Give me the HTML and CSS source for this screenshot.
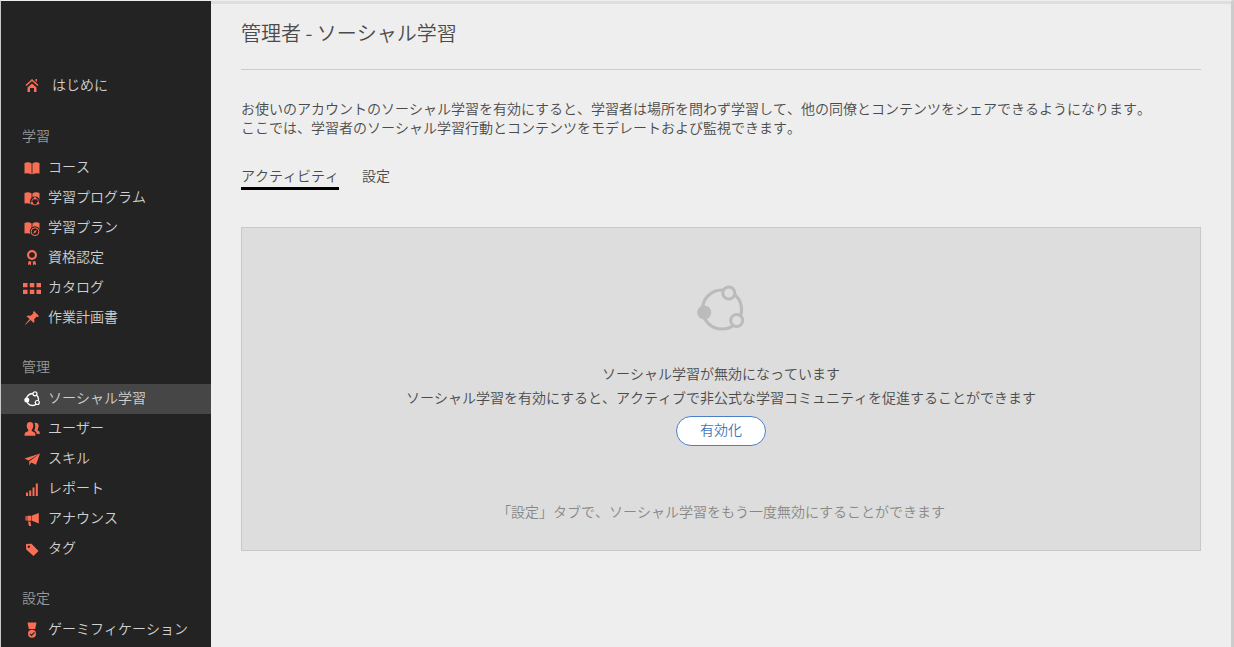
FILE: index.html
```html
<!DOCTYPE html>
<html lang="ja">
<head>
<meta charset="utf-8">
<meta name="viewport" content="width=device-width, initial-scale=1">
<title>管理者 - ソーシャル学習</title>
<link rel="stylesheet" href="styles.css">
</head>
<body>
<div class="app">
  <nav class="sidebar" aria-label="メイン">
    <a class="item home" href="#"><svg class="icon" viewBox="0 0 18 18"><path d="M3 9.500 9 4l6 5.500" fill="none" stroke="currentColor" stroke-width="1.600"/><path d="M12.500 3h1.500v3l-1.500-1z"/><path d="M4.500 11.500 9 7.500l4.500 4V16H11v-4H7v4H4.500z"/></svg>はじめに</a>

    <h2 class="heading">学習</h2>
    <ul class="list">
      <li><a class="item" href="#"><svg class="icon" viewBox="0 0 18 18"><path d="M1.500 4Q5.500 2.500 8.600 4.500V15.500Q5 13.500 1.500 14.500zM16.500 4Q12.500 2.500 9.400 4.500V15.500Q13 13.500 16.500 14.500z"/></svg>コース</a></li>
      <li><a class="item" href="#"><svg class="icon" viewBox="0 0 18 18"><path d="M1.500 4Q5.500 2.500 8.600 4.500V15.500Q5 13.500 1.500 14.500zM16.500 4Q12.500 2.500 9.400 4.500V15.500Q13 13.500 16.500 14.500z"/><circle class="cut" cx="12" cy="12.500" r="5"/><circle cx="12" cy="12.700" r="3.300" fill="none" stroke="currentColor" stroke-width=".8"/><circle cx="12" cy="9.200" r="1.200"/><circle cx="9" cy="14.200" r="1.200"/><circle cx="15" cy="14.200" r="1.200"/></svg>学習プログラム</a></li>
      <li><a class="item" href="#"><svg class="icon" viewBox="0 0 18 18"><path d="M1.500 4Q5.500 2.500 8.600 4.500V15.500Q5 13.500 1.500 14.500zM16.500 4Q12.500 2.500 9.400 4.500V15.500Q13 13.500 16.500 14.500z"/><circle class="cut" cx="12" cy="12.500" r="5.200"/><circle cx="12" cy="12.700" r="3.900" fill="none" stroke="currentColor" stroke-width="1"/><path d="m10.300 14.400 1-2.400 2.400-1-1 2.400z"/></svg>学習プラン</a></li>
      <li><a class="item" href="#"><svg class="icon" viewBox="0 0 18 18"><circle cx="9" cy="6" r="3.900" fill="none" stroke="currentColor" stroke-width="2.200"/><path d="M5.700 12 8.300 12.500 7.800 16.500 6.500 15.200l-1.700.8zM12.300 12 9.700 12.500l.5 4L11.500 15.200l1.700.8z"/></svg>資格認定</a></li>
      <li><a class="item" href="#"><svg class="icon" viewBox="0 0 18 18"><path d="M0 4h4.500v4.300H0zM6.800 4h4.500v4.300H6.800zM13.500 4H18v4.300h-4.500zM0 10.700h4.500V15H0zM6.800 10.700h4.500V15H6.800zM13.500 10.700H18V15h-4.500z"/></svg>カタログ</a></li>
      <li><a class="item" href="#"><svg class="icon" viewBox="0 0 18 18"><path d="m11 2 5 5-1.200 1-1.300-.3-2.300 2.500q.8 2-.5 3.800L7.600 11 2.500 15.800 2 15.500 6.600 10 3.500 7.200q2-1.200 4.100-.4l2.600-2.300L10 3z"/></svg>作業計画書</a></li>
    </ul>

    <h2 class="heading">管理</h2>
    <ul class="list">
      <li><a class="item current" href="#" aria-current="page"><svg class="icon" viewBox="0 0 18 18"><circle cx="9.500" cy="9.500" r="6" fill="none" stroke="currentColor" stroke-width="1.300"/><circle cx="3.800" cy="10" r="2.500"/><g class="node" stroke="currentColor" stroke-width="1.200"><circle cx="12" cy="3.800" r="2"/><circle cx="14.300" cy="12.500" r="2"/></g></svg>ソーシャル学習</a></li>
      <li><a class="item" href="#"><svg class="icon" viewBox="0 0 18 18"><path d="M11.500 3q3-1 4 1.800.5 2.200-.8 4.400v1.300l2 1.300V14h-3l-.5-2-2-1.500q2-3.500.3-7.500z"/><path d="M7 2q3.400.2 3.300 4-.2 2.500-1.600 4v1l3 1.500q.7.500.8 3.200h-11q0-2.700.8-3.200l3-1.500v-1Q3.800 8.500 3.700 6 3.700 2.200 7 2z"/></svg>ユーザー</a></li>
      <li><a class="item" href="#"><svg class="icon" viewBox="0 0 18 18"><path d="M17 3.500 1.500 8.500l4 2zM17 3.500 6.300 11.300l-.3 4.200 2.200-3 4.800 2.200z"/></svg>スキル</a></li>
      <li><a class="item" href="#"><svg class="icon" viewBox="0 0 18 18"><path d="M3 12.500h2V16H3zM6.200 10.500h2V16h-2zM9.500 7.500h2V16h-2zM12.800 3.500h2V16h-2z"/></svg>レポート</a></li>
      <li><a class="item" href="#"><svg class="icon" viewBox="0 0 18 18"><path d="M2.500 6v4.500h1.200V6zM4.300 5.800h4.200v4.900H4.300zM9 5.500 15.800 3v10.500L9 10.800zM5 11.500h2.300l1 4.500H6z"/></svg>アナウンス</a></li>
      <li><a class="item" href="#"><svg class="icon" viewBox="0 0 18 18"><path fill-rule="evenodd" d="M3 4 8.500 3.700 15.500 11l-5 5L3.200 9.500zM5.800 5.500a1.200 1.200 0 1 0 .1 0z"/></svg>タグ</a></li>
    </ul>

    <h2 class="heading">設定</h2>
    <ul class="list">
      <li><a class="item" href="#"><svg class="icon" viewBox="0 0 18 18"><path d="M4.500 1.500h9L12.200 8H5.800z"/><circle cx="9" cy="12.800" r="4"/><path class="tick" d="m7 12.800 1.500 1.500 3-3" fill="none"/></svg>ゲーミフィケーション</a></li>
    </ul>
  </nav>

  <main class="main">
    <h1 class="title">管理者 - ソーシャル学習</h1>
    <p class="intro">お使いのアカウントのソーシャル学習を有効にすると、学習者は場所を問わず学習して、他の同僚とコンテンツをシェアできるようになります。<br>ここでは、学習者のソーシャル学習行動とコンテンツをモデレートおよび監視できます。</p>
    <div class="tabs" role="tablist">
      <button class="tab selected" type="button" role="tab" aria-selected="true">アクティビティ</button>
      <button class="tab" type="button" role="tab" aria-selected="false">設定</button>
    </div>
    <section class="panel">
      <svg class="emblem" viewBox="0 0 48 48"><circle cx="25" cy="25.500" r="19.500" fill="none" stroke="currentColor" stroke-width="3.200"/><circle cx="7.200" cy="28.500" r="7"/><g class="node" stroke="currentColor" stroke-width="3"><circle cx="31.800" cy="9" r="6"/><circle cx="39.700" cy="36.500" r="6"/></g></svg>
      <p class="message">ソーシャル学習が無効になっています</p>
      <p class="message">ソーシャル学習を有効にすると、アクティブで非公式な学習コミュニティを促進することができます</p>
      <button class="enable" type="button">有効化</button>
      <p class="note">「設定」タブで、ソーシャル学習をもう一度無効にすることができます</p>
    </section>
  </main>
</div>
</body>
</html>
```
FILE: styles.css
```css
* {
  box-sizing: border-box;
}

body {
  margin: 0;
  background: #eeeeee;
  color: #4b4b4b;
  font: 350 14px/20px "Noto Sans CJK JP", sans-serif;
  font-kerning: none;
}

h1, h2, p, ul {
  margin: 0;
  padding: 0;
  font-weight: inherit;
}

button {
  font: inherit;
  font-kerning: inherit;
  color: inherit;
  cursor: pointer;
}

.app {
  display: flex;
  min-height: 100vh;
  border-top: 1px solid #eeeeee;
  border-left: 1px solid #c8c8c8;
  border-right: 3px solid #cccccc;
}

.sidebar {
  flex: none;
  width: 210px;
  padding-top: 69px;
  background: #232323;
  color: #d0d0d0;
}

.list {
  list-style: none;
}

.item {
  display: flex;
  align-items: center;
  gap: 7px;
  height: 30px;
  padding-bottom: 4px;
  padding-left: 22px;
  color: inherit;
  text-decoration: none;
}

.home {
  gap: 11px;
  margin-bottom: 2px;
  padding-bottom: 2px;
}

.icon {
  width: 18px;
  height: 18px;
  margin-top: 4px;
  color: #f96e55;
  fill: currentColor;
}

.home .icon {
  margin-top: 2px;
}

.cut {
  fill: #232323;
}

.tick {
  stroke: #232323;
  stroke-width: 1.2;
}

.current {
  background: #464646;
}

.current .icon {
  color: #ffffff;
}

.current .node {
  fill: #464646;
}

.heading {
  padding: 23px 0 8px 21px;
  color: #999999;
  font-size: 14px;
}

.main {
  flex: 1;
  padding: 16px 30px 30px;
  border-top: 3px solid #dedede;
}

.title {
  padding-bottom: 23px;
  border-bottom: 1px solid #cccccc;
  font-size: 20px;
  line-height: 26px;
}

.intro {
  margin-top: 29px;
  line-height: 19px;
}

.tabs {
  display: flex;
  gap: 23px;
  margin-top: 28px;
}

.tab {
  padding: 0 0 2px;
  border: 0;
  border-bottom: 3px solid transparent;
  background: none;
}

.selected {
  border-bottom-color: #000000;
}

.panel {
  display: flex;
  flex-direction: column;
  align-items: center;
  margin-top: 37px;
  padding: 56px 20px 29px;
  border: 1px solid #c8c8c8;
  background: #dddddd;
  text-align: center;
}

.emblem {
  width: 48px;
  height: 48px;
  margin-bottom: 29px;
  color: #bbbbbb;
  fill: currentColor;
}

.emblem .node {
  fill: #dddddd;
}

.message {
  line-height: 24px;
}

.enable {
  width: 90px;
  height: 30px;
  margin-top: 7px;
  padding: 0 0 4px;
  border: 1px solid #4b7fc9;
  border-radius: 15px;
  background: #ffffff;
  color: #3f76bd;
}

.note {
  margin-top: 55px;
  color: #888888;
}
```
